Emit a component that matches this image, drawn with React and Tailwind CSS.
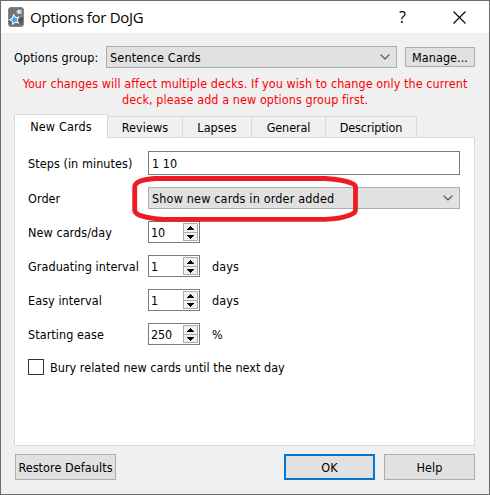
import React from "react";

function Chevron() {
  return (
    <svg className="mr-[6px] shrink-0" width="10" height="6" viewBox="0 0 10 6" fill="none">
      <path d="M.6.6 5 5 9.4.6" stroke="#4a4a4a" strokeWidth="1.1" />
    </svg>
  );
}

function Combo({ className, textClass, children }) {
  return (
    <div className={`flex h-[22px] items-center justify-between border border-[#adadad] bg-[#e1e1e1] ${className}`}>
      <span className={textClass}>{children}</span>
      <Chevron />
    </div>
  );
}

function Button({ className, textClass = "", children }) {
  return (
    <button className={`flex items-center justify-center bg-[#e1e1e1] ${className}`}>
      <span className={textClass}>{children}</span>
    </button>
  );
}

function Spin({ value }) {
  return (
    <div className="flex h-[22px] w-[52px] items-center justify-between border border-[#7a7a7a] bg-white pl-[2px] pr-px">
      <span className="pt-px tracking-[-0.2px]">{value}</span>
      <svg width="15" height="20" viewBox="0 0 15 20" shapeRendering="crispEdges">
        <rect x="0" y="1" width="15" height="18" fill="#adadad" />
        <rect x="1" y="2" width="13" height="8" fill="#f0f0f0" />
        <rect x="1" y="11" width="13" height="7" fill="#f0f0f0" />
        <path d="M7 4h1v1h1v1h1v1h1v1H4V7h1V6h1V5h1z" fill="#000" />
        <path d="M4 13h7v1h-1v1H9v1H8v1H7v-1H6v-1H5v-1H4z" fill="#000" />
      </svg>
    </div>
  );
}

function Row({ label, className = "", children }) {
  return (
    <div className={`flex items-center ${className}`}>
      <span className="w-[120px] shrink-0 pt-[2px]">{label}</span>
      {children}
    </div>
  );
}

function AppIcon() {
  return (
    <svg width="16" height="20" viewBox="0 0 16 20">
      <defs>
        <linearGradient id="case" x1="0" y1="0" x2="0" y2="1">
          <stop offset="0" stopColor="#5a5a5a" />
          <stop offset=".5" stopColor="#888" />
          <stop offset=".55" stopColor="#4a4a4a" />
          <stop offset="1" stopColor="#777" />
        </linearGradient>
      </defs>
      <rect x=".5" y=".5" width="15" height="19" rx="2.5" fill="url(#case)" stroke="#858585" />
      <path d="M1 11Q9 11 15 7V3q0-2-2-2H3Q1 1 1 3z" fill="#747474" />
      <path d="m5.700 7.800 1.900 2.700 3.200-.2-1.700 2.700 1.200 3-3.100-.7L4.600 17.300l-.3-3.200-2.800-1.500 3-1.300z" fill="#3ba4ee" stroke="#eef9ff" strokeWidth="1.100" />
      <path d="m10.500 2.500 1 1.100 1.700-.4-.6 1.500.8 1.400-1.700-.2-1.200 1.200-.4-1.600-1.500-.8 1.500-.7z" fill="#c4e8fc" stroke="#d4effd" strokeWidth=".9" />
    </svg>
  );
}

function Tab({ className, children }) {
  return (
    <div className={`flex h-[22px] items-center justify-center border-r border-t border-[#d9d9d9] ${className}`}>
      {children}
    </div>
  );
}

export default function App() {
  return (
    <div className="relative flex h-[495px] w-[490px] flex-col whitespace-nowrap border border-[#6b6b6b] bg-[#f0f0f0] font-['DejaVu_Sans_Condensed','DejaVu_Sans',sans-serif] text-[12.5px] leading-4 tracking-[0.07px] text-black">
      <header className="flex h-8 shrink-0 items-center bg-white pl-[7px]">
        <AppIcon />
        <span className="ml-[6px] pb-px font-['Open_Sans','Noto_Sans',sans-serif] text-[15px] tracking-[-0.3px]">Options for DoJG</span>
        <span className="ml-auto mr-[47px] pb-px font-['Open_Sans',sans-serif] text-[16px]">?</span>
        <svg className="mr-[23px]" width="13" height="13" viewBox="0 0 13 13">
          <path d="m.5.5 12 12m0-12-12 12" stroke="#000" strokeWidth="1.1" />
        </svg>
      </header>

      <div className="mt-[13px] flex h-[22px] shrink-0 items-center pl-[13px]">
        <span className="w-[92px] pt-[2px]">Options group:</span>
        <Combo className="w-[291px]" textClass="pl-[3px] pt-px tracking-[0.17px]">Sentence Cards</Combo>
        <Button className="ml-2 h-5 w-[70px] border border-[#adadad]" textClass="pt-px">Manage...</Button>
      </div>

      <div className="mt-[8px] h-8 shrink-0 text-center text-[#fb0007]">
        <div>Your changes will affect multiple decks. If you wish to change only the current</div>
        <div>deck, please add a new options group first.</div>
      </div>

      <div className="mt-[6px] ml-[13px] flex h-[24px] shrink-0 items-end">
        <div className="z-10 flex h-[24px] w-[94px] items-center justify-center border-x border-t border-[#d9d9d9] bg-white tracking-[0.15px]">New Cards</div>
        <Tab className="w-[75px]">Reviews</Tab>
        <Tab className="w-[69px]">Lapses</Tab>
        <Tab className="w-[74px] tracking-[-0.1px]">General</Tab>
        <Tab className="w-[91px] tracking-[-0.12px]">Description</Tab>
      </div>
      <main className="-mt-px ml-[13px] flex h-[309px] w-[461px] shrink-0 flex-col border border-[#d9d9d9] bg-white pl-[13px] pt-[13px]">
        <Row label="Steps (in minutes)" className="h-6">
          <div className="flex h-6 w-[312px] items-center border border-[#7a7a7a] bg-white pl-[3px] pt-px">1 10</div>
        </Row>
        <Row label="Order" className="mt-3 h-[22px]">
          <Combo className="w-[312px]" textClass="pl-[3px] pt-px tracking-[0.17px]">Show new cards in order added</Combo>
        </Row>
        <Row label="New cards/day" className="mt-3 h-[22px]"><Spin value="10" /></Row>
        <Row label="Graduating interval" className="mt-3 h-[22px]"><Spin value="1" /><span className="ml-3 pt-[2px]">days</span></Row>
        <Row label="Easy interval" className="mt-3 h-[22px]"><Spin value="1" /><span className="ml-3 pt-[2px]">days</span></Row>
        <Row label="Starting ease" className="mt-3 h-[22px]"><Spin value="250" /><span className="ml-3 pt-[2px]">%</span></Row>
        <div className="mt-[14px] flex h-4 items-center">
          <span className="h-4 w-4 border border-[#333] bg-white" />
          <span className="ml-[6px] pt-px tracking-[0.03px]">Bury related new cards until the next day</span>
        </div>
      </main>

      <footer className="mt-2 ml-[14px] flex h-[26px] shrink-0">
        <Button className="w-[101px] border border-[#adadad]" textClass="pt-px">Restore Defaults</Button>
        <Button className="ml-[168px] w-[91px] border-2 border-[#0078d7]" textClass="pt-px">OK</Button>
        <Button className="ml-[9px] w-[91px] border border-[#adadad]" textClass="pt-px">Help</Button>
      </footer>

      <svg className="pointer-events-none absolute left-[130px] top-[173px] z-20" width="232" height="50" viewBox="131 174 232 50" fill="none">
        <path d="M155 178.500H325Q345 180 351 183Q355.500 184.500 355.500 187V210Q355.500 213 350 215Q340 219 325 219.300H163Q146 218 139 215Q134.700 213 134.700 210V187Q134.700 180 155 178.500Z" stroke="#ed1c24" strokeWidth="4.800" />
      </svg>
    </div>
  );
}
